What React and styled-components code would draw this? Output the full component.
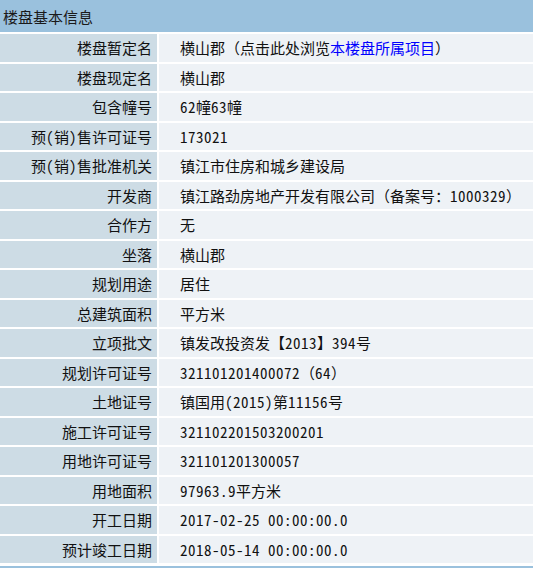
import React from 'react'
import styled, { createGlobalStyle } from 'styled-components'

const Global = createGlobalStyle`
  html, body { margin: 0; padding: 0; background: #fff; }
  body { font-family: "Noto Sans CJK SC", "Noto Sans", sans-serif; }
`

const Table = styled.div`
  width: 533px;
  background: #fff;
  padding-bottom: 3px;
  border-bottom: 2px solid #9ac1dd;
  font-size: 15px;
  color: #111;
`

const Header = styled.div`
  height: 32px;
  background: #9ac1dd;
  display: flex;
  align-items: center;
  padding-left: 3px;
  color: #1a1a1a;
`

const Grid = styled.div`
  display: grid;
  grid-template-columns: 157px 1fr;
  grid-auto-rows: 27.5px;
  gap: 2px;
  padding-top: 2px;
`

const Label = styled.div`
  background: #cddce5;
  display: flex;
  align-items: center;
  justify-content: flex-end;
  padding-right: 5px;
  white-space: pre;
`

const Value = styled.div`
  background: #eef2f6;
  display: flex;
  align-items: center;
  padding-left: 21px;
  white-space: pre;
`

// half-width runs (digits, dates, parens) are monospaced on the original page
const Latin = styled.span`
  font-feature-settings: "hwid";
  letter-spacing: 0.5px;
`

const Link = styled.a`
  color: #0000ff;
  text-decoration: none;
`

const txt = (s) =>
  s.split(/([\x20-\x7e]+)/).map((part, i) =>
    /^[\x20-\x7e]+$/.test(part) ? <Latin key={i}>{part}</Latin> : part
  )

const rows = [
  ['楼盘暂定名', <>横山郡（点击此处浏览<Link href="#">本楼盘所属项目</Link>）</>],
  ['楼盘现定名', '横山郡'],
  ['包含幢号', '62幢63幢'],
  ['预(销)售许可证号', '173021'],
  ['预(销)售批准机关', '镇江市住房和城乡建设局'],
  ['开发商', '镇江路劲房地产开发有限公司（备案号：1000329）'],
  ['合作方', '无'],
  ['坐落', '横山郡'],
  ['规划用途', '居住'],
  ['总建筑面积', '平方米'],
  ['立项批文', '镇发改投资发【2013】394号'],
  ['规划许可证号', '321101201400072（64）'],
  ['土地证号', '镇国用(2015)第11156号'],
  ['施工许可证号', '321102201503200201'],
  ['用地许可证号', '321101201300057'],
  ['用地面积', '97963.9平方米'],
  ['开工日期', '2017-02-25 00:00:00.0'],
  ['预计竣工日期', '2018-05-14 00:00:00.0'],
]

export default function App() {
  return (
    <>
      <Global />
      <Table>
        <Header>楼盘基本信息</Header>
        <Grid>
          {rows.map(([label, value]) => (
            <React.Fragment key={label}>
              <Label>{txt(label)}</Label>
              <Value>{typeof value === 'string' ? txt(value) : value}</Value>
            </React.Fragment>
          ))}
        </Grid>
      </Table>
    </>
  )
}
